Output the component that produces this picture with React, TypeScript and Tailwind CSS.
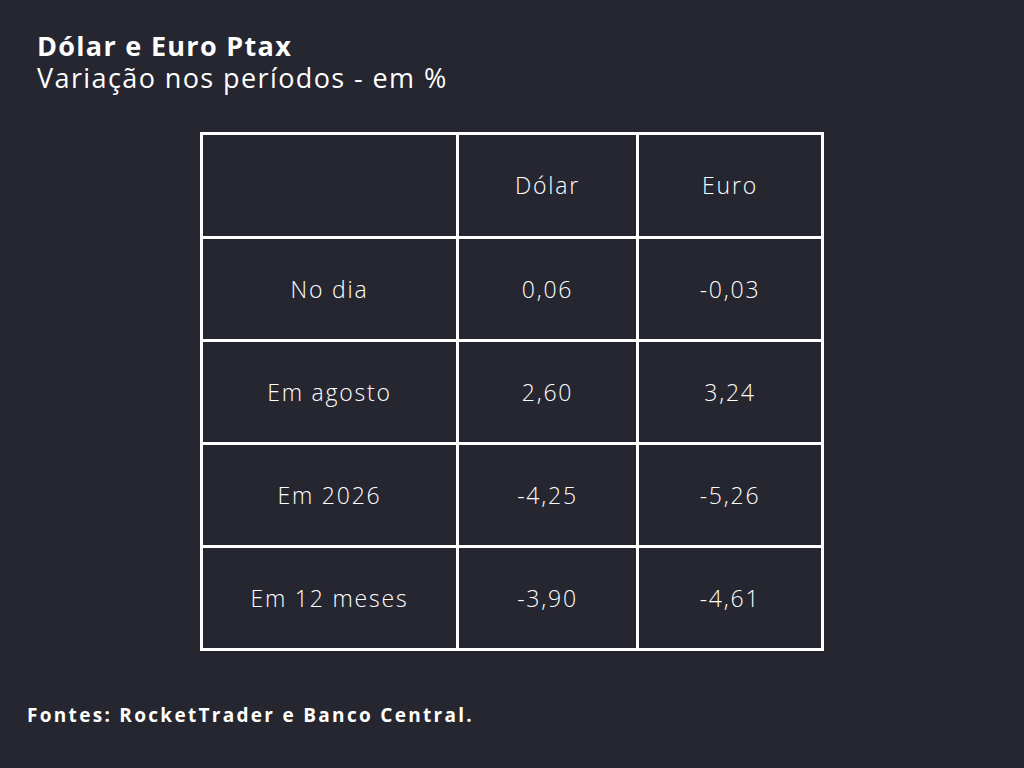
import React from "react";

const rows = [
  ["No dia", "0,06", "-0,03"],
  ["Em agosto", "2,60", "3,24"],
  ["Em 2026", "-4,25", "-5,26"],
  ["Em 12 meses", "-3,90", "-4,61"],
];

export default function App() {
  return (
    <div
      className="w-[1024px] h-[768px] bg-[#262630] text-white flex flex-col"
      style={{ fontFamily: '"Open Sans", "Liberation Sans", sans-serif' }}
    >
      <div className="pl-[37px] pt-[30px] flex flex-col">
        <div className="text-[27px] font-bold leading-[32px] tracking-[1.3px]">Dólar e Euro Ptax</div>
        <div className="text-[27px] font-normal leading-[32px] tracking-[1.4px]">Variação nos períodos - em %</div>
      </div>
      <div className="pl-[200px] pt-[38px]">
        <table className="border-collapse border-[3px] border-white text-[23px] font-light tracking-[1.8px]">
          <tbody>
            <tr className="h-[104px]">
              <td className="w-[256px] border-[3px] border-white"></td>
              <td className="w-[180px] border-[3px] border-white text-center">Dólar</td>
              <td className="w-[185px] border-[3px] border-white text-center">Euro</td>
            </tr>
            {rows.map((r) => (
              <tr key={r[0]} className="h-[103px]">
                {r.map((c, i) => (
                  <td key={i} className="border-[3px] border-white text-center">
                    {c}
                  </td>
                ))}
              </tr>
            ))}
          </tbody>
        </table>
      </div>
      <div className="pl-[27px] pt-[50px] text-[19px] font-bold tracking-[2.3px]">
        Fontes: RocketTrader e Banco Central.
      </div>
    </div>
  );
}
